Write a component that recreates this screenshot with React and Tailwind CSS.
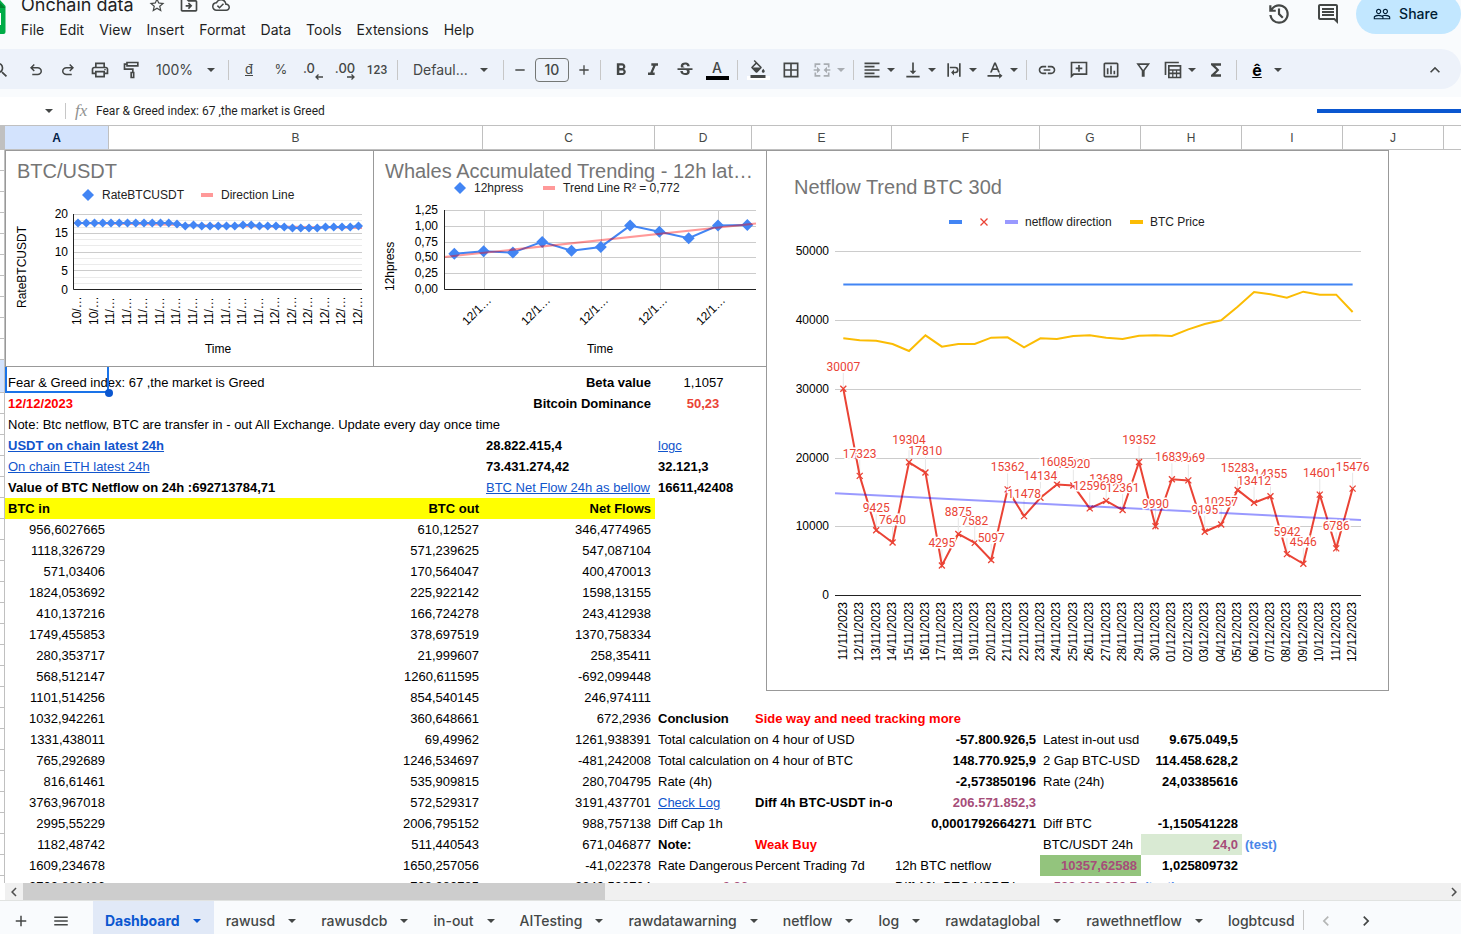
import {
    MdStarBorder,
    MdOutlineDriveFileMove,
    MdOutlineCloudDone,
    MdOutlineComment,
    MdPeopleOutline,
    MdSearch,
    MdOutlinePrint,
    MdAdd,
    MdRemove,
    MdFormatBold,
    MdFormatItalic,
    MdStrikethroughS,
    MdFormatColorFill,
    MdBorderAll,
    MdFormatAlignLeft,
    MdVerticalAlignBottom,
    MdLink,
    MdOutlineInsertChart,
    MdFunctions,
    MdKeyboardArrowUp,
    MdChevronLeft,
    MdChevronRight,
    MdMenu,
} from "react-icons/md";

const menus = ["File", "Edit", "View", "Insert", "Format", "Data", "Tools", "Extensions", "Help"];

const tabs = ["Dashboard", "rawusd", "rawusdcb", "in-out", "AITesting", "rawdatawarning", "netflow", "log", "rawdataglobal", "rawethnetflow", "logbtcusd"];

const columns = [
    ["A", "w-[104px]"],
    ["B", "w-[374px]"],
    ["C", "w-[172px]"],
    ["D", "w-[97px]"],
    ["E", "w-[140px]"],
    ["F", "w-[148px]"],
    ["G", "w-[101px]"],
    ["H", "w-[101px]"],
    ["I", "w-[101px]"],
    ["J", "w-[101px]"],
    ["", ""],
];

const B = "font-bold";
const R = "text-right";
const BR = "font-bold text-right";
const RED = "font-bold text-[#ff0000]";
const PURPLE = "font-bold text-right text-[#a64d79]";

// each cell is [text, classes, href]
const rows = [
    { A: ["12/12/2023", RED], C: ["Bitcoin Dominance", BR], D: ["50,23", "font-bold text-center text-[#ea4335]"] },
    { A: ["Note: Btc netflow, BTC are transfer in - out All Exchange. Update every day once time"] },
    { A: ["USDT on chain latest 24h", B, "#usdt"], C: ["28.822.415,4", B], D: ["logc", "", "#logc"] },
    { A: ["On chain ETH latest 24h", "", "#eth"], C: ["73.431.274,42", B], D: ["32.121,3", B] },
    { A: ["Value of BTC Netflow on 24h :692713784,71", B], C: ["BTC Net Flow 24h as bellow", "", "#netflow"], D: ["16611,42408", B] },
    { A: ["BTC in", "font-bold bg-[#ffff00]"], B: ["BTC out", "font-bold text-right bg-[#ffff00]"], C: ["Net Flows", "font-bold text-right bg-[#ffff00]"] },
    { A: ["956,6027665", R], B: ["610,12527", R], C: ["346,4774965", R] },
    { A: ["1118,326729", R], B: ["571,239625", R], C: ["547,087104", R] },
    { A: ["571,03406", R], B: ["170,564047", R], C: ["400,470013", R] },
    { A: ["1824,053692", R], B: ["225,922142", R], C: ["1598,13155", R] },
    { A: ["410,137216", R], B: ["166,724278", R], C: ["243,412938", R] },
    { A: ["1749,455853", R], B: ["378,697519", R], C: ["1370,758334", R] },
    { A: ["280,353717", R], B: ["21,999607", R], C: ["258,35411", R] },
    { A: ["568,512147", R], B: ["1260,611595", R], C: ["-692,099448", R] },
    { A: ["1101,514256", R], B: ["854,540145", R], C: ["246,974111", R] },
    { A: ["1032,942261", R], B: ["360,648661", R], C: ["672,2936", R], D: ["Conclusion", B], E: ["Side way and need tracking more", RED] },
    { A: ["1331,438011", R], B: ["69,49962", R], C: ["1261,938391", R], D: ["Total calculation on 4 hour of USD"], F: ["-57.800.926,5", BR], G: ["Latest in-out usd"], H: ["9.675.049,5", BR] },
    { A: ["765,292689", R], B: ["1246,534697", R], C: ["-481,242008", R], D: ["Total calculation on 4 hour of BTC"], F: ["148.770.925,9", BR], G: ["2 Gap BTC-USD"], H: ["114.458.628,2", BR] },
    { A: ["816,61461", R], B: ["535,909815", R], C: ["280,704795", R], D: ["Rate (4h)"], F: ["-2,573850196", BR], G: ["Rate (24h)"], H: ["24,03385616", BR] },
    { A: ["3763,967018", R], B: ["572,529317", R], C: ["3191,437701", R], D: ["Check Log", "", "#log"], E: ["Diff 4h BTC-USDT in-out", "font-bold overflow-hidden"], F: ["206.571.852,3", PURPLE] },
    { A: ["2995,55229", R], B: ["2006,795152", R], C: ["988,757138", R], D: ["Diff Cap 1h"], F: ["0,0001792664271", BR], G: ["Diff BTC"], H: ["-1,150541228", BR] },
    { A: ["1182,48742", R], B: ["511,440543", R], C: ["671,046877", R], D: ["Note:", B], E: ["Weak Buy", RED], G: ["BTC/USDT 24h"], H: ["24,0", "font-bold text-right text-[#a64d79] bg-[#d9ead3]"], I: ["(test)", "font-bold text-[#4a86e8]"] },
    { A: ["1609,234678", R], B: ["1650,257056", R], C: ["-41,022378", R], D: ["Rate Dangerous"], E: ["Percent Trading 7d"], F: ["12h BTC netflow"], G: ["10357,62588", "font-bold text-right text-[#a64d79] bg-[#93c47d]"], H: ["1,025809732", BR] },
    { A: ["2702,882486", R], B: ["728,283785", R], C: ["2240,598704", R], D: ["0,26", PURPLE], F: ["Diff 12h BTC-USDT in-out", "overflow-hidden"], G: ["588.208.290,7", PURPLE], H: ["(test)", "font-bold text-[#4a86e8]"] },
];

const rateY = [
    72, 72, 72, 72, 72, 72, 72, 72, 72, 72, 72, 72, 73, 75, 74, 75, 75, 75, 75, 75, 74, 74, 75, 75, 75, 76, 77, 77, 77, 77, 76, 76, 76, 76, 75,
];
const rateLabels = ["10", "10", "11", "11", "11", "11", "11", "11", "11", "11", "11", "11", "12", "12", "12", "12", "12", "12"];

const press = [0.56, 0.6, 0.58, 0.75, 0.61, 0.67, 1.01, 0.91, 0.81, 1.01, 1.02];

const netflow = [
    30007, 17323, 9425, 7640, 19304, 17810, 4295, 8875, 7582, 5097, 15362, 11478, 14134, 16085, 15920, 12596,
    13689, 12361, 19352, 9990, 16839, 16669, 9195, 10257, 15283, 13412, 14355, 5942, 4546, 14601, 6786, 15476,
];
const price = [
    37333, 37042, 36994, 36509, 35491, 37770, 36121, 36509, 36509, 37430, 37479, 36024, 37333, 37236, 37673, 37770,
    37430, 37236, 37721, 37770, 37673, 38643, 39418, 39952, 41939, 44073, 43733, 43248, 44121, 43685, 43685, 41164,
];
const days = netflow.map((_, i) => {
    const day = i < 20 ? i + 11 : i - 19;
    return `${String(day).padStart(2, "0")}/${i < 20 ? 11 : 12}/2023`;
});

const points = (list) => list.map(([x, y]) => `${x},${y}`).join(" ");

function Diamond({ x, y, r }) {
    return <path d={`M${x - r} ${y}L${x} ${y - r}L${x + r} ${y}L${x} ${y + r}z`} fill="#4285f4" />;
}

function Cross({ x, y, r = 3 }) {
    return <path d={`M${x - r} ${y - r}l${2 * r} ${2 * r}M${x + r} ${y - r}l${-2 * r} ${2 * r}`} stroke="#ea4335" strokeWidth="1.3" />;
}

function RateChart() {
    const pts = rateY.map((y, i) => [72 + i * 8.25, y]);
    return (
        <svg width="367" height="215" fontSize="12" className="block">
            <text x="11" y="27" fontSize="20" fill="#757575">BTC/USDT</text>
            <Diamond x={82} y={44} r={6} />
            <text x="96" y="48" fill="#222">RateBTCUSDT</text>
            <rect x="195" y="42" width="12" height="4" fill="#ff9999" />
            <text x="215" y="48" fill="#222">Direction Line</text>
            {[0, 1, 2, 3, 4, 5, 6, 7, 8, 9, 10, 11].map((i) => (
                <path key={i} d={`M68 ${Math.round(63 + i * 6.25) + 0.5}H356`} stroke={i % 3 ? "#ebebeb" : "#cccccc"} />
            ))}
            {[20, 15, 10, 5, 0].map((v, i) => (
                <text key={v} x="62" y={67 + i * 19} textAnchor="end">{v}</text>
            ))}
            <path d="M68 72L356 77" stroke="#ff9999" strokeWidth="2" />
            <polyline points={points(pts)} fill="none" stroke="#4285f4" strokeWidth="2" />
            {pts.map(([x, y], i) => <Diamond key={i} x={x} y={y} r={4.5} />)}
            <path d="M67.5 63V138.5H356" fill="none" stroke="#222" />
            {rateLabels.map((m, i) => (
                <text key={i} transform={`translate(${75 + i * 16.5} 174) rotate(-90)`}>{m}/…</text>
            ))}
            <text transform="translate(20 157) rotate(-90)">RateBTCUSDT</text>
            <text x="212" y="202" textAnchor="middle">Time</text>
        </svg>
    );
}

function WhalesChart() {
    const pts = press.map((v, i) => [80.3 + i * 29.3, 138 - v * 62.8]);
    return (
        <svg width="392" height="215" fontSize="12" className="block">
            <text x="11" y="27" fontSize="20" fill="#757575">Whales Accumulated Trending - 12h lat…</text>
            <Diamond x={86} y={37} r={6} />
            <text x="100" y="41" fill="#222">12hpress</text>
            <rect x="169" y="35" width="12" height="4" fill="#ff9999" />
            <text x="189" y="41" fill="#222">Trend Line R² = 0,772</text>
            {["1,25", "1,00", "0,75", "0,50", "0,25", "0,00"].map((v, i) => (
                <g key={v}>
                    <path d={`M70 ${Math.round(59 + i * 15.8) + 0.5}H382`} stroke="#cccccc" />
                    <text x="64" y={63 + i * 15.8} textAnchor="end">{v}</text>
                </g>
            ))}
            {[110, 169, 227, 286, 344].map((x) => (
                <g key={x}>
                    <path d={`M${x + 0.5} 59V138`} stroke="#cccccc" />
                    <text transform={`translate(${x + 8} 150) rotate(-45)`} textAnchor="end">12/1…</text>
                </g>
            ))}
            <polyline points={points(pts)} fill="none" stroke="#4285f4" strokeWidth="2" />
            {pts.map(([x, y], i) => <Diamond key={i} x={x} y={y} r={6} />)}
            <path d="M70 106L382 72.5" stroke="#ff0000" strokeOpacity="0.4" strokeWidth="2" />
            <path d="M70.5 59V138.5H382" fill="none" stroke="#222" />
            <text transform="translate(20 140) rotate(-90)">12hpress</text>
            <text x="226" y="202" textAnchor="middle">Time</text>
        </svg>
    );
}

function NetflowChart() {
    const px = (i) => 76.3 + i * 16.43;
    const py = (v) => 444 - v * 0.006875;
    const flow = netflow.map((v, i) => [px(i), py(v)]);
    return (
        <svg width="621" height="539" fontSize="12" className="block">
            <text x="27" y="43" fontSize="20" fill="#757575">Netflow Trend BTC 30d</text>
            <rect x="182" y="69" width="13" height="4" fill="#4285f4" />
            <Cross x={217} y={71} r={3.5} />
            <rect x="238" y="69" width="13" height="4" fill="#9999ff" />
            <text x="258" y="75" fill="#222">netflow direction</text>
            <rect x="363" y="69" width="13" height="4" fill="#fbbc04" />
            <text x="383" y="75" fill="#222">BTC Price</text>
            {[50000, 40000, 30000, 20000, 10000, 0].map((v) => (
                <g key={v}>
                    <path d={`M68 ${Math.round(py(v)) + 0.5}H594`} stroke={v ? "#cccccc" : "#222"} />
                    <text x="62" y={py(v) + 4} textAnchor="end">{v}</text>
                </g>
            ))}
            {flow.map(([x, y], i) => <path key={i} d={`M${x} ${y - 16}V${y}`} stroke="#e6e6e6" />)}
            <path d={`M${px(0)} 133.5H${px(31)}`} stroke="#4285f4" strokeWidth="2" />
            <polyline points={points(flow)} fill="none" stroke="#ea4335" strokeWidth="2" />
            {flow.map(([x, y], i) => <Cross key={i} x={x} y={y} />)}
            <polyline points={points(price.map((v, i) => [px(i), py(v)]))} fill="none" stroke="#fbbc04" strokeWidth="2" />
            <path d="M68 342.3L594 369" stroke="#0000ff" strokeOpacity="0.4" strokeWidth="2" />
            {flow.map(([x, y], i) => (
                <text key={i} x={x} y={y - 18} textAnchor="middle" className="font-[Roboto,sans-serif]" fill="#ea4335" stroke="#fff" strokeWidth="3" paintOrder="stroke">
                    {netflow[i]}
                </text>
            )).reverse()}
            {days.map((d, i) => (
                <text key={d} transform={`translate(${px(i) + 3.5} 451) rotate(-90)`} textAnchor="end">{d}</text>
            ))}
        </svg>
    );
}

function Caret({ className = "" }) {
    return (
        <svg viewBox="0 0 10 10" className={`w-[10px] h-[10px] shrink-0 ${className}`} fill="currentColor">
            <path d="M1 3h8L5 7z" />
        </svg>
    );
}

function Divider() {
    return <div className="w-px h-5 mx-1 bg-[#c7c7c7] shrink-0" />;
}

function Tool({ label, width = "w-8", children }) {
    return (
        <button type="button" aria-label={label} className={`${width} h-8 shrink-0 flex items-center justify-center`}>
            {children}
        </button>
    );
}

function DropTool({ label, width = "w-[41px]", className = "", children }) {
    return (
        <button type="button" aria-label={label} className={`${width} h-8 shrink-0 flex items-center pl-1 gap-1 ${className}`}>
            {children}
            <Caret />
        </button>
    );
}

function Icon({ size = "size-5", className = "", children }) {
    return <svg viewBox="0 0 24 24" className={`${size} shrink-0 ${className}`} fill="currentColor">{children}</svg>;
}

const undoPath = "M7 19v-2h7.1q1.575 0 2.738-1T18 13.5 16.838 11 14.1 10H7.8l2.6 2.6L9 14 4 9l5-5 1.4 1.4L7.8 8h6.3q2.425 0 4.163 1.575T20 13.5t-1.737 3.925T14.1 19z";

function Header() {
    return (
        <header className="flex h-[49px] shrink-0 overflow-hidden">
            <svg viewBox="0 0 6 34" className="w-[6px] h-[34px] shrink-0">
                <path d="M0 0L5.5 6V32q0 2-2 2H0z" fill="#00ac47" />
                <path d="M0 3L5.5 8H0z" fill="#00832d" />
                <path d="M0 13h1v12H0z" fill="#fff" />
            </svg>
            <div className="pl-[15px] grow">
                <div className="flex items-center h-6 -mt-[7px]">
                    <h1 className="text-lg leading-6 text-[#1f1f1f]">Onchain data</h1>
                    <div className="flex items-center gap-[13px] pl-[14px]">
                        <button type="button" aria-label="Star"><MdStarBorder className="size-[18px]" /></button>
                        <button type="button" aria-label="Move"><MdOutlineDriveFileMove className="size-5" /></button>
                        <button type="button" aria-label="Document status"><MdOutlineCloudDone className="size-[18px]" /></button>
                    </div>
                </div>
                <nav className="flex items-center h-6 mt-px gap-[15px] text-sm text-[#1f1f1f]">
                    {menus.map((m) => <button type="button" key={m}>{m}</button>)}
                </nav>
            </div>
            <div className="flex items-center h-10 -mt-[6px]">
                <button type="button" aria-label="Version history">
                    <Icon size="size-[26px]">
                        <path d="M12 21q-3.45 0-6.012-2.287T3.05 13H5.1q.35 2.6 2.313 4.3T12 19q2.925 0 4.963-2.037T19 12t-2.037-4.962T12 5q-1.725 0-3.225.8T6.25 8H9v2H3V4h2v2.35q1.275-1.6 3.113-2.475T12 3q1.875 0 3.513.713t2.85 1.924 1.925 2.85T21 12t-.712 3.513-1.925 2.85-2.85 1.925T12 21m2.8-4.8L11 12.4V7h2v4.6l3.2 3.2z" />
                    </Icon>
                </button>
                <button type="button" aria-label="Comments" className="ml-6 mr-4"><MdOutlineComment className="size-6" /></button>
                <button type="button" className="flex items-center justify-center gap-2 w-[105px] h-10 pr-[6px] rounded-full bg-[#c2e7ff] text-sm font-medium text-[#001d35]">
                    <MdPeopleOutline className="size-[18px]" />
                    Share
                </button>
            </div>
        </header>
    );
}

function Toolbar() {
    return (
        <div className="flex items-center h-10 shrink-0 mb-2 pt-px pr-[10px] rounded-r-full bg-[#edf2fa] text-sm overflow-hidden">
            <div className="flex -ml-4 mr-1"><Tool label="Search"><MdSearch className="size-5" /></Tool></div>
            <Tool label="Undo"><Icon size="size-[18px]"><path d={undoPath} /></Icon></Tool>
            <Tool label="Redo"><Icon size="size-[18px]" className="-scale-x-100"><path d={undoPath} /></Icon></Tool>
            <Tool label="Print"><MdOutlinePrint className="size-5" /></Tool>
            <Tool label="Paint format">
                <Icon><path fillRule="evenodd" d="M5 2h15v6H5V6H4v4h10v4h1v8h-5v-8h2v-2H2V4h3zM7 4v2h11V4zM12 16v4h1v-4z" /></Icon>
            </Tool>
            <button type="button" className="w-[76px] h-8 shrink-0 flex items-center justify-between pl-2 pr-2">100%<Caret /></button>
            <Divider />
            <Tool label="Currency"><span className="underline text-[13px]">đ</span></Tool>
            <Tool label="Percent"><span className="text-[13px]">%</span></Tool>
            <Tool label="Decrease decimal places">
                <span className="relative pr-2 pb-1 text-[13px] font-medium leading-4">
                    .0
                    <svg viewBox="0 0 8 6" className="absolute right-0 bottom-0 w-2 h-[6px]" fill="none" stroke="currentColor" strokeWidth="1.3"><path d="M8 3H1M3.500.500L1 3l2.500 2.500" /></svg>
                </span>
            </Tool>
            <Tool label="Increase decimal places">
                <span className="relative pb-1 text-[13px] font-medium leading-4">
                    .00
                    <svg viewBox="0 0 8 6" className="absolute right-0 bottom-0 w-2 h-[6px]" fill="none" stroke="currentColor" strokeWidth="1.3"><path d="M0 3h7M4.500.500L7 3 4.500 5.500" /></svg>
                </span>
            </Tool>
            <Tool label="More formats"><span className="text-xs font-medium font-[Roboto,sans-serif]">123</span></Tool>
            <Divider />
            <button type="button" className="w-[97px] h-8 shrink-0 flex items-center justify-between pl-[11px] pr-[10px]">Defaul...<Caret /></button>
            <Divider />
            <Tool label="Decrease font size" width="w-6"><MdRemove className="size-4" /></Tool>
            <input aria-label="Font size" defaultValue="10" className="w-[34px] h-6 mx-[3px] shrink-0 rounded border border-[#747775] bg-transparent text-center font-medium" />
            <Tool label="Increase font size" width="w-6"><MdAdd className="size-4" /></Tool>
            <Divider />
            <Tool label="Bold"><MdFormatBold className="size-5" /></Tool>
            <Tool label="Italic"><MdFormatItalic className="size-5" /></Tool>
            <Tool label="Strikethrough"><MdStrikethroughS className="size-5" /></Tool>
            <Tool label="Text color">
                <span className="w-[23px] border-b-4 border-black text-center font-medium leading-4">A</span>
            </Tool>
            <Divider />
            <Tool label="Fill color" width="w-8">
                <span className="w-[23px] h-5 border-b-4 border-white flex justify-center"><MdFormatColorFill className="size-[18px]" /></span>
            </Tool>
            <Tool label="Borders" width="w-[34px]"><MdBorderAll className="size-5" /></Tool>
            <DropTool label="Merge cells" className="text-[#444746]/40">
                <Icon><path d="M3 4h7v2H5v3H3zM14 4h7v5h-2V6h-5zM3 15h2v3h5v2H3zM19 15h2v5h-7v-2h5zM2 11h4V8l4 4-4 4v-3H2zM22 11h-4V8l-4 4 4 4v-3h4z" /></Icon>
            </DropTool>
            <Divider />
            <DropTool label="Horizontal align"><MdFormatAlignLeft className="size-5" /></DropTool>
            <DropTool label="Vertical align"><MdVerticalAlignBottom className="size-5" /></DropTool>
            <DropTool label="Text wrapping">
                <Icon><path d="M4 4h2v16H4zM18 4h2v16h-2zM7 8h6.500a4 4 0 0 1 0 8H12v2.500L8.500 15l3.500-3.500V14h1.500a2 2 0 0 0 0-4H7z" /></Icon>
            </DropTool>
            <DropTool label="Text rotation">
                <Icon><path d="M11 3h2l5 12h-2.200l-1.200-3H9.400l-1.200 3H6zm1 2.600L10.100 10h3.800zM3 18h14v-2.500l4 3.500-4 3.500V20H3z" /></Icon>
            </DropTool>
            <Divider />
            <Tool label="Insert link"><MdLink className="size-5" /></Tool>
            <Tool label="Insert comment">
                <Icon><path fillRule="evenodd" d="M2 2h20v16H6l-4 4zM4 4v13l1-1h15V4zM11 6h2v3h3v2h-3v3h-2v-3H8V9h3z" /></Icon>
            </Tool>
            <Tool label="Insert chart"><MdOutlineInsertChart className="size-5" /></Tool>
            <Tool label="Create a filter">
                <Icon><path fillRule="evenodd" d="M4 4h16.500L14 13v7h-3.500v-7zM7.800 6l4.450 6 4.450-6z" /></Icon>
            </Tool>
            <DropTool label="Filter views">
                <Icon><path fillRule="evenodd" d="M2 2h17v2H4v14H2zM6 6h16v16H6zM8 8v3h12V8zM8 13v2h3v-2zM12.500 13v2h3v-2zM17 13v2h3v-2zM8 17v3h3v-3zM12.500 17v3h3v-3zM17 17v3h3v-3z" /></Icon>
            </DropTool>
            <Tool label="Functions"><MdFunctions className="size-5" /></Tool>
            <Divider />
            <DropTool label="Input tools" width="w-12"><span className="w-6 text-center text-base leading-4 font-bold text-black underline">ê</span></DropTool>
            <div className="ml-auto"><Tool label="Hide the menus"><MdKeyboardArrowUp className="size-5" /></Tool></div>
        </div>
    );
}

function FormulaBar() {
    return (
        <div className="flex items-center h-7 shrink-0 bg-white">
            <button type="button" aria-label="Name box" className="w-[54px] h-full flex items-center justify-end"><Caret /></button>
            <div className="w-px h-4 ml-[11px] bg-[#c7c7c7]" />
            <label htmlFor="formula" className="pl-[9px] w-[30px] font-[Liberation_Serif,serif] italic text-[17px] leading-4 text-[#8f9190]">fx</label>
            <input id="formula" defaultValue="Fear &amp; Greed index: 67 ,the market is Greed" className="grow text-xs text-[#1f1f1f] font-[Roboto,sans-serif] outline-none" />
            <div className="w-36 h-1 bg-[#0b57d0]" />
        </div>
    );
}

function Cell({ cell }) {
    if (!cell) return <td />;
    const [text, className = "", href] = cell;
    return (
        <td className={`pl-[3px] pr-1 ${className}`}>
            {href ? <a href={href} className="underline text-[#1155cc]">{text}</a> : text}
        </td>
    );
}

function RowHead() {
    return <td className="border-r border-b border-[#c0c0c0]" />;
}

function Sheet() {
    const blank = Array.from({ length: 10 });
    return (
        <main className="relative grow min-h-0 overflow-hidden bg-white font-[Liberation_Sans,Arial,sans-serif] text-black">
            <table className="table-fixed w-full border-separate border-spacing-0 text-[13px] leading-[21px] whitespace-nowrap">
                <thead>
                    <tr className="h-[25px] text-xs leading-4 text-[#444746]">
                        <th className="w-[5px] bg-[#c0c0c0]" />
                        {columns.map(([name, width]) => (
                            <th
                                key={name}
                                scope="col"
                                className={`${width} p-0 border-t border-b border-[#c0c0c0] ${name ? "border-r" : ""} ${name === "A" ? "bg-[#d3e3fd] font-bold text-[#041e49]" : "font-normal"}`}
                            >
                                {name}
                            </th>
                        ))}
                    </tr>
                </thead>
                <tbody>
                    {blank.map((_, i) => (
                        <tr key={i} className="h-[21px]"><RowHead /></tr>
                    ))}
                    <tr className="h-[33px] align-bottom">
                        <td className="border-r border-b border-[#c0c0c0] bg-[#d3e3fd]" />
                        <td className="relative pl-[3px]">
                            Fear &amp; Greed index: 67 ,the market is Greed
                            <span className="absolute inset-0 border-2 border-[#1a73e8]" />
                            <span className="absolute -right-1 -bottom-1 size-2 rounded-full bg-[#0b57d0]" />
                        </td>
                        <td />
                        <td className="pr-1 text-right font-bold">Beta value</td>
                        <td className="text-center">1,1057</td>
                    </tr>
                    {rows.map((row, i) => (
                        <tr key={i} className="h-[21px]">
                            <RowHead />
                            {columns.map(([name]) => <Cell key={name} cell={row[name]} />)}
                        </tr>
                    ))}
                </tbody>
            </table>
            <div className="absolute left-[5px] top-[25px] flex items-start">
                <figure className="border border-[#999999] bg-white"><RateChart /></figure>
                <figure className="-ml-px border border-[#999999] bg-white"><WhalesChart /></figure>
                <figure className="-ml-px border border-[#999999] bg-white"><NetflowChart /></figure>
            </div>
        </main>
    );
}

function ScrollBar() {
    return (
        <div className="flex h-[17px] shrink-0 border-l-[5px] border-white bg-[#f0f0f0] text-[#505050]">
            <button type="button" aria-label="Scroll left" className="w-[18px] flex items-center justify-center"><MdChevronLeft className="size-[18px]" /></button>
            <div className="w-2/5 bg-[#cdcdcd]" />
            <button type="button" aria-label="Scroll right" className="ml-auto w-[14px] flex items-center justify-center"><MdChevronRight className="size-[18px] shrink-0" /></button>
        </div>
    );
}

function TabBar() {
    return (
        <footer className="flex h-[34px] shrink-0 border-t border-[#e1e3e1] text-sm font-medium overflow-hidden">
            <button type="button" aria-label="Add sheet" className="w-[41px] h-10 shrink-0 flex items-center justify-center"><MdAdd className="size-[18px]" /></button>
            <button type="button" aria-label="All sheets" className="w-10 h-10 mr-3 shrink-0 flex items-center justify-center"><MdMenu className="size-[18px]" /></button>
            <div className="flex grow min-w-0 overflow-hidden">
                {tabs.map((t, i) => (
                    <button
                        type="button"
                        key={t}
                        className={`h-10 px-3 gap-3 shrink-0 flex items-center ${i === 0 ? "bg-[#e1e9f7] font-bold text-[#0b57d0]" : ""}`}
                    >
                        {t}
                        <Caret />
                    </button>
                ))}
            </div>
            <div className="w-px h-5 mt-[9px] bg-[#c7c7c7]" />
            <div className="flex w-[157px] h-10 shrink-0 items-center gap-5 pl-3">
                <button type="button" aria-label="Previous sheets" className="text-[#b5b7b6]"><MdChevronLeft className="size-5" /></button>
                <button type="button" aria-label="Next sheets"><MdChevronRight className="size-5" /></button>
            </div>
        </footer>
    );
}

export default function App() {
    return (
        <div className="flex flex-col h-screen overflow-hidden bg-[#f9fbfd] font-[Inter,sans-serif] text-[#444746]">
            <Header />
            <Toolbar />
            <FormulaBar />
            <Sheet />
            <ScrollBar />
            <TabBar />
        </div>
    );
}
